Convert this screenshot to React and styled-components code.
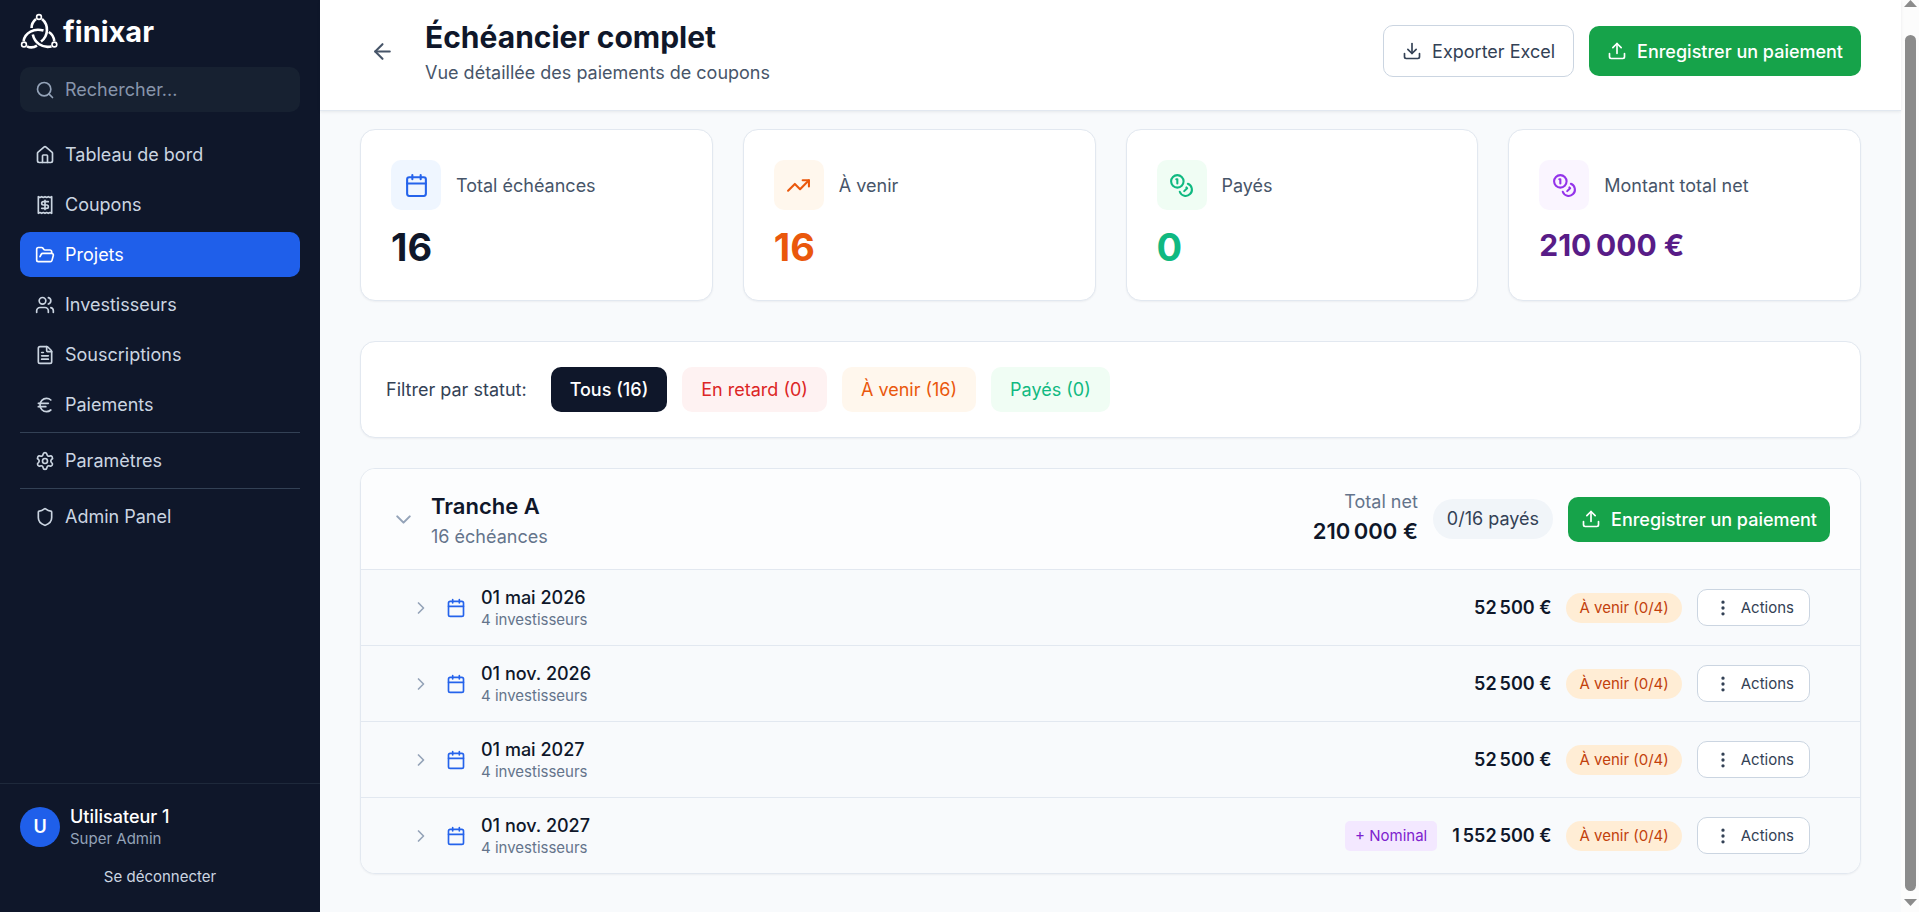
import React from "react";
import styled, { createGlobalStyle, css } from "styled-components";
import {
  ArrowLeft, Calendar, ChevronDown, ChevronRight, Coins, Download, EllipsisVertical, Euro,
  FileText, FolderOpen, House, Receipt, Search, Settings, Shield, TrendingUp, Upload, Users,
} from "lucide-react";

const GlobalStyle = createGlobalStyle`
  *, *::before, *::after { box-sizing: border-box; }
  body {
    margin: 0;
    background: #f8fafc;
    color: #0f172a;
    font-family: Inter, "Liberation Sans", sans-serif;
    font-size: 18px;
    line-height: 25px;
  }
  h1, h2, p, ul { margin: 0; padding: 0; }
  ul { list-style: none; }
  button, input { font: inherit; color: inherit; }
  button { cursor: pointer; border: 0; background: none; padding: 0; white-space: nowrap; }
  a { color: inherit; text-decoration: none; }
  svg { flex-shrink: 0; display: block; }
`;

const Shell = styled.div`
  display: grid;
  grid-template-columns: 320px minmax(0, 1fr) 18px;
  min-height: 100vh;
`;

/* Sidebar */

const Sidebar = styled.aside`
  position: sticky;
  top: 0;
  height: 100vh;
  display: flex;
  flex-direction: column;
  background: #0f172a;
  color: #cbd5e1;
`;

const Brand = styled.a`
  display: flex;
  align-items: center;
  gap: 5px;
  height: 67px;
  padding: 0 20px 4px;
  color: #ffffff;
`;

const Wordmark = styled.span`
  font-size: 29px;
  font-weight: 700;
  line-height: 40px;
`;

const SearchBox = styled.label`
  display: flex;
  align-items: center;
  gap: 10px;
  height: 45px;
  margin: 0 20px 20px;
  padding: 0 15px;
  border-radius: 10px;
  background: #172131;
  color: #94a3b8;
`;

const SearchInput = styled.input`
  flex: 1;
  min-width: 0;
  padding: 0;
  border: 0;
  outline: 0;
  background: none;
  &::placeholder { color: #8795ab; opacity: 1; }
`;

const Nav = styled.nav`
  flex: 1;
  display: flex;
  flex-direction: column;
  gap: 5px;
  padding: 0 20px;
`;

const NavLink = styled.a`
  display: flex;
  align-items: center;
  gap: 10px;
  height: 45px;
  padding: 0 15px;
  border-radius: 10px;
  ${({ $active }) => $active && css`
    background: #1f5fea;
    color: #ffffff;
  `}
`;

const NavDivider = styled.div`
  height: 1px;
  background: #334155;
`;

const Account = styled.div`
  display: flex;
  flex-direction: column;
  gap: 13px;
  padding: 20px;
  border-top: 1px solid #1e293b;
`;

const Profile = styled.div`
  display: flex;
  align-items: center;
  gap: 10px;
`;

const Avatar = styled.span`
  display: grid;
  place-items: center;
  width: 40px;
  height: 40px;
  border-radius: 50%;
  background: #1f5fea;
  color: #ffffff;
  font-weight: 600;
`;

const ProfileName = styled.p`
  color: #ffffff;
  font-weight: 500;
`;

const ProfileRole = styled.p`
  color: #94a3b8;
  font-size: 15px;
  line-height: 20px;
`;

const LogoutButton = styled.button`
  height: 30px;
  font-size: 15px;
  line-height: 20px;
`;

/* Page header */

const Main = styled.main`
  min-width: 0;
`;

const PageHeader = styled.header`
  position: sticky;
  top: 0;
  z-index: 1;
  display: flex;
  align-items: center;
  gap: 20px;
  padding: 17px 40px 25px;
  border-bottom: 1px solid #e2e8f0;
  background: #ffffff;
  box-shadow: 0 1px 3px rgba(15, 23, 42, 0.08);
`;

const BackButton = styled.button`
  padding: 10px;
  color: #475569;
`;

const Heading = styled.div`
  display: flex;
  flex-direction: column;
  gap: 3px;
  flex: 1;
`;

const PageTitle = styled.h1`
  font-size: 30px;
  font-weight: 700;
  line-height: 40px;
`;

const PageSubtitle = styled.p`
  color: #475569;
`;

const HeaderActions = styled.div`
  display: flex;
  align-items: center;
  gap: 15px;
`;

const Button = styled.button`
  display: inline-flex;
  align-items: center;
  gap: 10px;
  height: ${({ $compact }) => ($compact ? 45 : 50)}px;
  padding: 0 ${({ $compact }) => ($compact ? 13 : 18)}px;
  border-radius: 10px;
  background: #16a34a;
  color: #ffffff;
  font-weight: 500;
`;

const OutlineButton = styled(Button)`
  height: 52px;
  border: 1px solid #cbd5e1;
  background: #ffffff;
  color: #334155;
  font-weight: 400;
`;

/* Content */

const Content = styled.div`
  display: flex;
  flex-direction: column;
  gap: 30px;
  padding: 18px 40px 38px;
`;

const Card = styled.section`
  border: 1px solid #e2e8f0;
  border-radius: 15px;
  background: #ffffff;
  box-shadow: 0 1px 2px rgba(15, 23, 42, 0.05);
`;

const StatGrid = styled.div`
  display: grid;
  grid-template-columns: repeat(4, minmax(0, 1fr));
  gap: 30px;
  margin-bottom: 10px;
`;

const StatCard = styled(Card)`
  padding: 30px;
`;

const StatHead = styled.div`
  display: flex;
  align-items: center;
  gap: 15px;
  margin-bottom: 15px;
  color: #475569;
`;

const StatIcon = styled.span`
  display: grid;
  place-items: center;
  width: 50px;
  height: 50px;
  border-radius: 10px;
  background: ${({ $background }) => $background};
  color: ${({ $color }) => $color};
`;

const StatValue = styled.p`
  height: 45px;
  color: ${({ $color }) => $color};
  font-size: ${({ $small }) => ($small ? 30 : 38)}px;
  font-weight: 700;
  line-height: ${({ $small }) => ($small ? 40 : 45)}px;
`;

const FilterCard = styled(Card)`
  display: flex;
  align-items: center;
  flex-wrap: wrap;
  gap: 15px;
  padding: 25px;
`;

const FilterLabel = styled.span`
  margin-right: 9px;
  color: #334155;
`;

const FilterButton = styled.button`
  height: 45px;
  padding: 0 19px;
  border-radius: 10px;
  background: ${({ $background }) => $background};
  color: ${({ $color }) => $color};
  font-weight: ${({ $active }) => ($active ? 500 : 400)};
`;

const TrancheCard = styled(Card)`
  overflow: hidden;
`;

const TrancheHeader = styled.div`
  display: flex;
  align-items: center;
  gap: 15px;
  padding: 20px 30px;
  background: #fcfdfe;
`;

const ToggleButton = styled.button`
  color: #94a3b8;
`;

const Grow = styled.div`
  flex: 1;
  min-width: 0;
`;

const TrancheTitle = styled.h2`
  font-size: 22px;
  font-weight: 600;
  line-height: 35px;
`;

const Muted = styled.p`
  color: #64748b;
`;

const Total = styled.div`
  text-align: right;
`;

const TotalAmount = styled.p`
  font-size: 22px;
  font-weight: 600;
  line-height: 35px;
`;

const PaidPill = styled.span`
  padding: 7px 14px 8px;
  border-radius: 20px;
  background: #f1f5f9;
  color: #334155;
`;

const Row = styled.li`
  display: flex;
  align-items: center;
  gap: 15px;
  padding: 15px 50px;
  border-top: 1px solid #e2e8f0;
  background: #f8fafc;
  > svg { color: #2563eb; }
`;

const RowDate = styled.p`
  font-weight: 500;
`;

const RowDetail = styled.p`
  color: #64748b;
  font-size: 15px;
  line-height: 20px;
`;

const RowAmount = styled.span`
  font-weight: 600;
`;

const Tag = styled.span`
  padding: 5px 10px;
  border-radius: 5px;
  background: #f3e8ff;
  color: #7e22ce;
  font-size: 15px;
  line-height: 20px;
`;

const StatusPill = styled(Tag)`
  padding: 5px 13px;
  border-radius: 15px;
  background: #ffedd5;
  color: #c2410c;
`;

const ActionsButton = styled.button`
  display: inline-flex;
  align-items: center;
  gap: 8px;
  height: 37px;
  padding: 0 15px;
  border: 1px solid #cbd5e1;
  border-radius: 10px;
  background: #ffffff;
  color: #334155;
  font-size: 15px;
  line-height: 20px;
`;

/* Scroll rail */

const ScrollRail = styled.div`
  position: sticky;
  top: 0;
  height: 100vh;
  display: flex;
  flex-direction: column;
  align-items: center;
  gap: 28px;
  padding-bottom: 6px;
  background: #fcfcfc;
  color: #8b8b8b;
`;

const ScrollThumb = styled.div`
  flex: 1;
  width: 11px;
  margin-bottom: -20px;
  border-radius: 6px;
  background: currentColor;
`;

function Logo() {
  return (
    <svg width="38" height="38" viewBox="20 13 38 38" fill="none" stroke="currentColor" strokeWidth="2.6" aria-hidden="true">
      <g strokeWidth="1.6">
        <circle cx="39" cy="17" r="2.4" />
        <circle cx="24" cy="44.5" r="2.4" />
        <circle cx="54.4" cy="44.5" r="2.4" />
      </g>
      <path d="M42 19C49 25 48.500 36 41 41.500" />
      <path d="M36 19C33 21.500 31.500 24.500 31.600 28" />
      <path d="M23.600 41C25 32.500 34 27.800 43.500 30.600" />
      <path d="M54.300 41C53.800 37 52 34 48.800 32" />
      <path d="M51.500 46.400C42 48.500 34.500 42.500 32.800 34.500" />
      <path d="M27 46.300C30 47.800 34 47.500 37 45.600" />
    </svg>
  );
}

const NAV_GROUPS = [
  [
    { label: "Tableau de bord", icon: House },
    { label: "Coupons", icon: Receipt },
    { label: "Projets", icon: FolderOpen, active: true },
    { label: "Investisseurs", icon: Users },
    { label: "Souscriptions", icon: FileText },
    { label: "Paiements", icon: Euro },
  ],
  [{ label: "Paramètres", icon: Settings }],
  [{ label: "Admin Panel", icon: Shield }],
];

const STATS = [
  { label: "Total échéances", value: "16", icon: Calendar, background: "#eff6ff", color: "#2563eb", valueColor: "#0f172a" },
  { label: "À venir", value: "16", icon: TrendingUp, background: "#fff7ed", color: "#ea580c", valueColor: "#ea580c" },
  { label: "Payés", value: "0", icon: Coins, background: "#f0fdf4", color: "#10b981", valueColor: "#10b981" },
  { label: "Montant total net", value: "210\u202f000\u00a0€", icon: Coins, background: "#faf5ff", color: "#9333ea", valueColor: "#581c87", small: true },
];

const FILTERS = [
  { label: "Tous (16)", background: "#0f172a", color: "#ffffff", active: true },
  { label: "En retard (0)", background: "#fef2f2", color: "#dc2626" },
  { label: "À venir (16)", background: "#fff7ed", color: "#ea580c" },
  { label: "Payés (0)", background: "#f0fdf4", color: "#10b981" },
];

const ROWS = [
  { date: "01 mai 2026", amount: "52\u202f500\u00a0€" },
  { date: "01 nov. 2026", amount: "52\u202f500\u00a0€" },
  { date: "01 mai 2027", amount: "52\u202f500\u00a0€" },
  { date: "01 nov. 2027", amount: "1\u202f552\u202f500\u00a0€", nominal: true },
];

export default function App() {
  return (
    <>
      <GlobalStyle />
      <Shell>
        <Sidebar>
          <Brand href="#">
            <Logo />
            <Wordmark>finixar</Wordmark>
          </Brand>
          <SearchBox>
            <Search size={20} />
            <SearchInput type="text" placeholder="Rechercher..." aria-label="Rechercher" />
          </SearchBox>
          <Nav>
            {NAV_GROUPS.map((group, index) => (
              <React.Fragment key={index}>
                {index > 0 && <NavDivider />}
                {group.map(({ label, icon: Icon, active }) => (
                  <NavLink key={label} href="#" $active={active}>
                    <Icon size={20} />
                    {label}
                  </NavLink>
                ))}
              </React.Fragment>
            ))}
          </Nav>
          <Account>
            <Profile>
              <Avatar>U</Avatar>
              <div>
                <ProfileName>Utilisateur 1</ProfileName>
                <ProfileRole>Super Admin</ProfileRole>
              </div>
            </Profile>
            <LogoutButton type="button">Se déconnecter</LogoutButton>
          </Account>
        </Sidebar>

        <Main>
          <PageHeader>
            <BackButton type="button" aria-label="Retour">
              <ArrowLeft size={25} />
            </BackButton>
            <Heading>
              <PageTitle>Échéancier complet</PageTitle>
              <PageSubtitle>Vue détaillée des paiements de coupons</PageSubtitle>
            </Heading>
            <HeaderActions>
              <OutlineButton type="button">
                <Download size={20} />
                Exporter Excel
              </OutlineButton>
              <Button type="button">
                <Upload size={20} />
                Enregistrer un paiement
              </Button>
            </HeaderActions>
          </PageHeader>

          <Content>
            <StatGrid>
              {STATS.map(({ label, value, icon: Icon, background, color, valueColor, small }) => (
                <StatCard key={label}>
                  <StatHead>
                    <StatIcon $background={background} $color={color}>
                      <Icon size={25} />
                    </StatIcon>
                    {label}
                  </StatHead>
                  <StatValue $color={valueColor} $small={small}>{value}</StatValue>
                </StatCard>
              ))}
            </StatGrid>

            <FilterCard>
              <FilterLabel>Filtrer par statut:</FilterLabel>
              {FILTERS.map(({ label, background, color, active }) => (
                <FilterButton key={label} type="button" aria-pressed={!!active} $background={background} $color={color} $active={active}>
                  {label}
                </FilterButton>
              ))}
            </FilterCard>

            <TrancheCard>
              <TrancheHeader>
                <ToggleButton type="button" aria-label="Replier la tranche">
                  <ChevronDown size={25} />
                </ToggleButton>
                <Grow>
                  <TrancheTitle>Tranche A</TrancheTitle>
                  <Muted>16 échéances</Muted>
                </Grow>
                <Total>
                  <Muted>Total net</Muted>
                  <TotalAmount>{"210\u202f000\u00a0€"}</TotalAmount>
                </Total>
                <PaidPill>0/16 payés</PaidPill>
                <Button type="button" $compact>
                  <Upload size={20} />
                  Enregistrer un paiement
                </Button>
              </TrancheHeader>
              <ul>
                {ROWS.map(({ date, amount, nominal }) => (
                  <Row key={date}>
                    <ToggleButton type="button" aria-label={`Déplier ${date}`}>
                      <ChevronRight size={20} />
                    </ToggleButton>
                    <Calendar size={20} />
                    <Grow>
                      <RowDate>{date}</RowDate>
                      <RowDetail>4 investisseurs</RowDetail>
                    </Grow>
                    {nominal && <Tag>+ Nominal</Tag>}
                    <RowAmount>{amount}</RowAmount>
                    <StatusPill>À venir (0/4)</StatusPill>
                    <ActionsButton type="button">
                      <EllipsisVertical size={20} />
                      Actions
                    </ActionsButton>
                  </Row>
                ))}
              </ul>
            </TrancheCard>
          </Content>
        </Main>

        <ScrollRail aria-hidden="true">
          <svg width="13" height="7" viewBox="0 0 13 7" fill="currentColor"><path d="M6.500 0L13 7H0Z" /></svg>
          <ScrollThumb />
          <svg width="13" height="7" viewBox="0 0 13 7" fill="currentColor"><path d="M0 0H13L6.500 7Z" /></svg>
        </ScrollRail>
      </Shell>
    </>
  );
}
